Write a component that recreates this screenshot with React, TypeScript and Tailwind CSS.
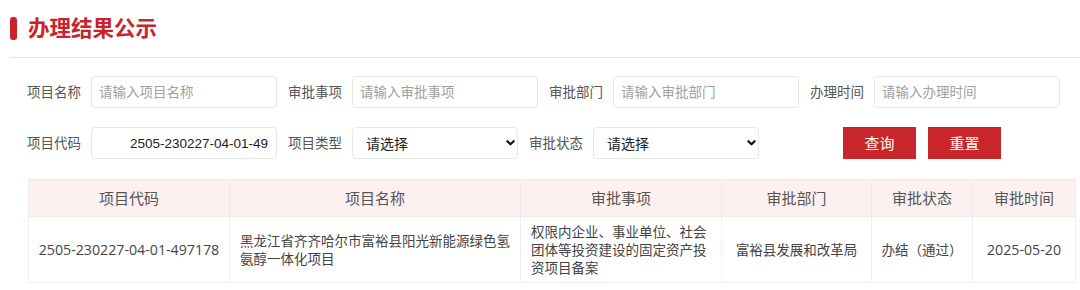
import type { ReactNode } from "react";

const font = "font-['Open_Sans','Noto_Sans_CJK_SC',sans-serif]";

const columns = [
  { title: "项目代码", width: "w-[201px]" },
  { title: "项目名称", width: "w-[291px]" },
  { title: "审批事项", width: "w-[201px]" },
  { title: "审批部门", width: "w-[150px]" },
  { title: "审批状态", width: "w-[101px]" },
  { title: "审批时间", width: "w-[103px]" },
];

function Label({ children }: { children: ReactNode }) {
  return (
    <span className="w-[54px] mr-[10px] shrink-0 text-[13.5px] text-[#555] whitespace-nowrap">
      {children}
    </span>
  );
}

function TextInput({ placeholder, value }: { placeholder?: string; value?: string }) {
  return (
    <input
      readOnly
      value={value}
      placeholder={placeholder}
      className={
        "w-[186px] h-[32px] border border-[#e8e8e8] rounded-[4px] text-[13.5px] outline-none font-['Liberation_Sans','Noto_Sans_CJK_SC',sans-serif] " +
        (value ? "pl-[38px] pr-[8px] text-[#222]" : "px-[7px] placeholder:text-[#a0a0a0]")
      }
    />
  );
}

function Select() {
  return (
    <div className="relative w-[166px] h-[32px]">
      <select className="w-full h-full appearance-none border border-[#e8e8e8] rounded-[4px] pl-[13px] text-[14px] text-[#222] bg-white outline-none">
        <option>请选择</option>
      </select>
      <svg
        className="absolute right-[3px] top-[13px] w-[9px] h-[6px] pointer-events-none"
        viewBox="0 0 10 6"
        fill="none"
        stroke="#111"
        strokeWidth={2.4}
        strokeLinecap="round"
        strokeLinejoin="round"
      >
        <path d="M1.5 1l3.5 3.5L8.5 1" />
      </svg>
    </div>
  );
}

export default function App() {
  return (
    <div className={`w-[1080px] h-[290px] bg-white overflow-hidden ${font}`}>
      <div className="flex items-center pl-[10px] pt-[16px] h-[40px]">
        <div className="w-[7px] h-[23px] rounded-[3px] bg-[#c9232b]" />
        <h1 className="ml-[11px] text-[21.5px] leading-[24px] font-bold text-[#c9232b]">
          办理结果公示
        </h1>
      </div>
      <div className="ml-[10px] mt-[17px] border-b border-[#e2e2e2]" />

      <div className="pl-[27px] pt-[18px] flex flex-col gap-[19px]">
        <div className="flex items-center gap-[11px]">
          <div className="flex items-center">
            <Label>项目名称</Label>
            <TextInput placeholder="请输入项目名称" />
          </div>
          <div className="flex items-center">
            <Label>审批事项</Label>
            <TextInput placeholder="请输入审批事项" />
          </div>
          <div className="flex items-center">
            <Label>审批部门</Label>
            <TextInput placeholder="请输入审批部门" />
          </div>
          <div className="flex items-center">
            <Label>办理时间</Label>
            <TextInput placeholder="请输入办理时间" />
          </div>
        </div>

        <div className="flex items-center gap-[11px]">
          <div className="flex items-center">
            <Label>项目代码</Label>
            <TextInput value="2505-230227-04-01-497178" />
          </div>
          <div className="flex items-center">
            <Label>项目类型</Label>
            <Select />
          </div>
          <div className="flex items-center">
            <Label>审批状态</Label>
            <Select />
          </div>
          <div className="flex items-center gap-[12px] ml-[73px]">
            <button className="w-[73px] h-[32px] bg-[#c8262b] text-white text-[15px]">查询</button>
            <button className="w-[73px] h-[32px] bg-[#c8262b] text-white text-[15px]">重置</button>
          </div>
        </div>
      </div>

      <table className="ml-[28px] mt-[20px] w-[1047px] table-fixed border-collapse">
        <thead>
          <tr className="bg-[#fdf0f0] h-[37px]">
            {columns.map((c) => (
              <th
                key={c.title}
                className={`${c.width} border border-[#f2eaea] text-[15px] font-normal text-[#555] text-center`}
              >
                {c.title}
              </th>
            ))}
          </tr>
        </thead>
        <tbody>
          <tr className="h-[66px] text-[13.5px] leading-[18px] text-[#444]">
            <td className="border border-[#efefef] px-[6px] text-center text-[14.2px]">2505-230227-04-01-497178</td>
            <td className="border border-[#efefef] px-[10px] text-left">
              黑龙江省齐齐哈尔市富裕县阳光新能源绿色氢氨醇一体化项目
            </td>
            <td className="border border-[#efefef] px-[10px] text-left">
              权限内企业、事业单位、社会团体等投资建设的固定资产投资项目备案
            </td>
            <td className="border border-[#efefef] px-[8px] text-center">富裕县发展和改革局</td>
            <td className="border border-[#efefef] px-[4px] text-center">办结（通过）</td>
            <td className="border border-[#efefef] px-[4px] text-center text-[14.2px]">2025-05-20</td>
          </tr>
        </tbody>
      </table>
    </div>
  );
}
